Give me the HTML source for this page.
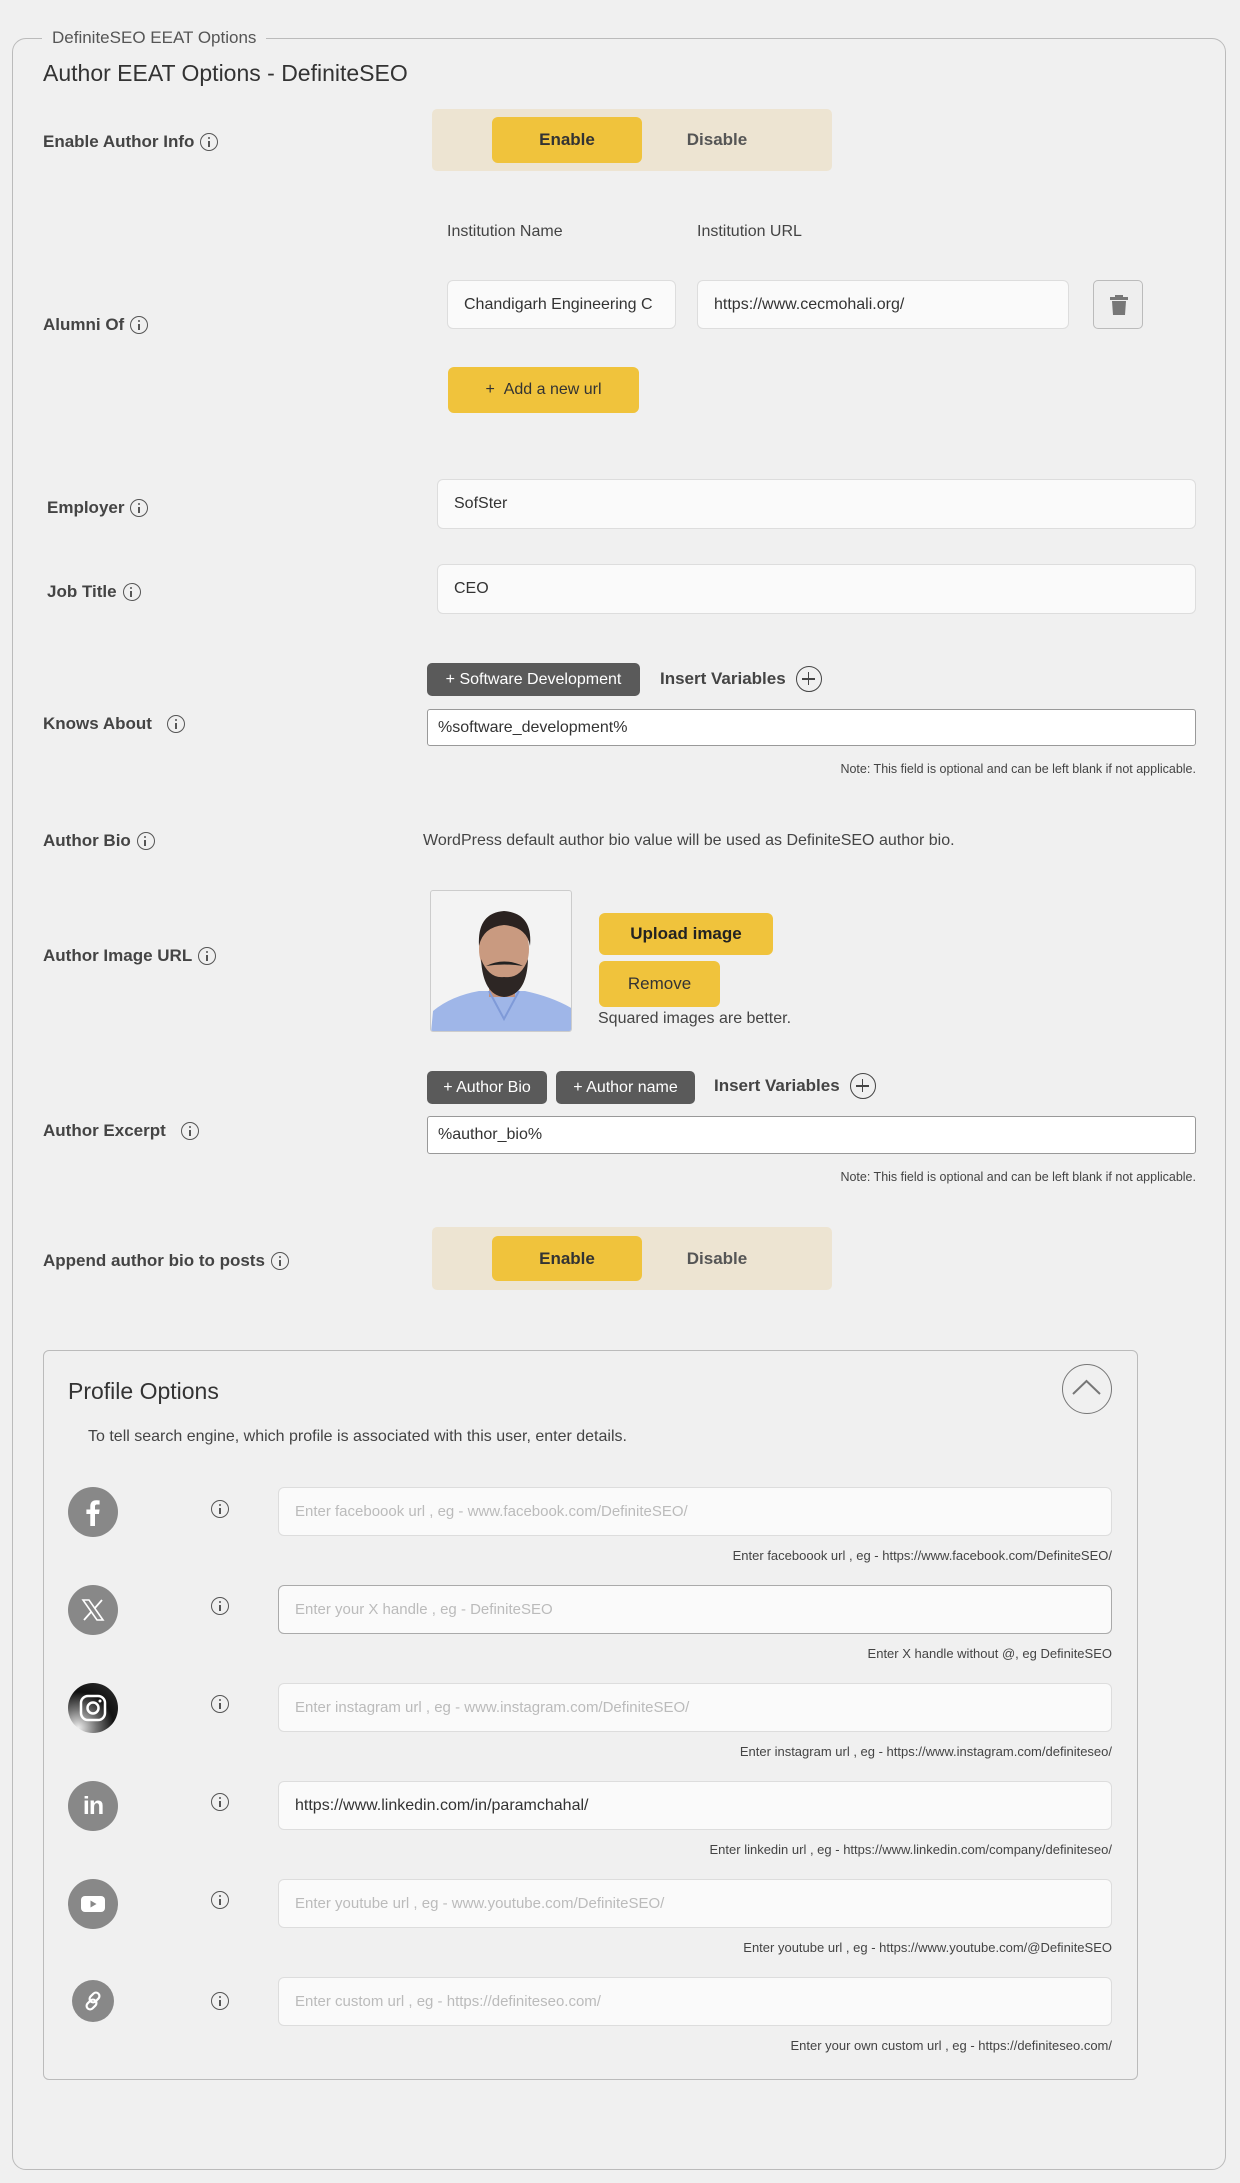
<!DOCTYPE html>
<html><head><meta charset="utf-8"><style>
*{box-sizing:border-box;margin:0;padding:0}
body{width:1240px;height:2183px;background:#f0f0f0;font-family:"Liberation Sans",sans-serif;color:#3c3c3c;position:relative;overflow:hidden}
.a{position:absolute}
.lbl{position:absolute;font-size:17px;font-weight:bold;color:#444;display:flex;align-items:center;gap:6px;transform:translateY(-50%)}
.ic{display:inline-block;width:18px;height:18px;border:1.6px solid #555;border-radius:50%;position:relative}
.ic:before{content:"";position:absolute;left:6.6px;top:3px;width:2px;height:2px;background:#555;border-radius:1px}
.ic:after{content:"";position:absolute;left:6.6px;top:6.5px;width:2px;height:6px;background:#555}
.inp{position:absolute;background:#fafafa;border:1px solid #ddd;border-radius:6px;font-size:16px;color:#333;padding-left:16px;display:flex;align-items:center;white-space:nowrap;overflow:hidden}
.ph{color:#bbb;font-size:15px}
.tog{position:absolute;background:#ede4d2;border-radius:5px}
.btn{position:absolute;background:#f0c33c;border-radius:6px;display:flex;align-items:center;justify-content:center;font-size:17px;color:#333}
.tag{position:absolute;background:#5a5a5a;color:#fff;border-radius:5px;font-size:16px;display:flex;align-items:center;justify-content:center}
.note{position:absolute;right:44px;font-size:12.5px;color:#444}
.pl{position:absolute;width:26px;height:26px;border:1.6px solid #444;border-radius:50%}
.pl:before{content:"";position:absolute;left:5px;top:11px;width:13px;height:1.6px;background:#444}
.pl:after{content:"";position:absolute;left:10.7px;top:5px;width:1.6px;height:13px;background:#444}
.si{position:absolute;left:68px;width:50px;height:50px;border-radius:50%;background:#888;display:flex;align-items:center;justify-content:center}
.ii{position:absolute;left:211px}
.help{position:absolute;right:128px;font-size:13px;color:#444}
</style></head><body>
<div class="a" style="left:12px;top:38px;width:1214px;height:2132px;border:1.5px solid #bbb;border-radius:14px"></div>
<div class="a" style="left:42px;top:27px;padding:0 10px;background:#f0f0f0;font-size:17px;color:#555;line-height:22px">DefiniteSEO EEAT Options</div>
<div class="a" style="left:43px;top:60px;font-size:23px;color:#333">Author EEAT Options - DefiniteSEO</div>

<div class="lbl" style="left:43px;top:142px">Enable Author Info <span class="ic"></span></div>
<div class="tog" style="left:432px;top:109px;width:400px;height:62px"></div>
<div class="btn" style="left:492px;top:117px;width:150px;height:46px;font-weight:bold">Enable</div>
<div class="a" style="left:642px;top:117px;width:150px;height:46px;display:flex;align-items:center;justify-content:center;font-weight:bold;font-size:17px;color:#555">Disable</div>

<div class="a" style="left:447px;top:223px;font-size:16px;color:#444">Institution Name</div>
<div class="a" style="left:697px;top:223px;font-size:16px;color:#444">Institution URL</div>
<div class="lbl" style="left:43px;top:325px">Alumni Of <span class="ic"></span></div>
<div class="inp" style="left:447px;top:280px;width:229px;height:49px">Chandigarh Engineering C</div>
<div class="inp" style="left:697px;top:280px;width:372px;height:49px">https://www.cecmohali.org/</div>
<div class="a" style="left:1093px;top:280px;width:50px;height:49px;border:1.5px solid #bbb;border-radius:5px;background:#eee">
<svg width="50" height="49" viewBox="0 0 50 49"><rect x="16" y="16" width="18" height="3" fill="#777"/><rect x="21" y="14" width="8" height="3" fill="#777"/><path d="M18 20h14l-1 14h-12z" fill="#777"/></svg></div>
<div class="btn" style="left:448px;top:367px;width:191px;height:46px;font-size:16px">+&nbsp;&nbsp;Add a new url</div>

<div class="lbl" style="left:47px;top:508px">Employer <span class="ic"></span></div>
<div class="inp" style="left:437px;top:479px;width:759px;height:50px">SofSter</div>
<div class="lbl" style="left:47px;top:592px">Job Title <span class="ic"></span></div>
<div class="inp" style="left:437px;top:564px;width:759px;height:50px">CEO</div>

<div class="tag" style="left:427px;top:663px;width:213px;height:33px">+ Software Development</div>
<div class="a" style="left:660px;top:669px;font-size:17px;font-weight:bold;color:#444">Insert Variables</div>
<div class="pl" style="left:796px;top:666px"></div>
<div class="lbl" style="left:43px;top:724px">Knows About &nbsp;<span class="ic"></span></div>
<div class="inp" style="left:427px;top:709px;width:769px;height:37px;background:#fff;border-color:#999;border-radius:3px;padding-left:10px">%software_development%</div>
<div class="note" style="top:762px">Note: This field is optional and can be left blank if not applicable.</div>

<div class="lbl" style="left:43px;top:841px">Author Bio <span class="ic"></span></div>
<div class="a" style="left:423px;top:832px;font-size:16px;color:#444">WordPress default author bio value will be used as DefiniteSEO author bio.</div>

<div class="lbl" style="left:43px;top:956px">Author Image URL <span class="ic"></span></div>
<div class="a" style="left:430px;top:890px;width:142px;height:142px;border:1px solid #ccc;border-radius:3px;background:#f3f3f3;overflow:hidden">
<svg width="142" height="142" viewBox="0 0 142 142"><path d="M0 142 L2 120 Q20 105 48 100 L94 100 Q122 106 142 118 L142 142Z" fill="#9fb6e8"/><rect x="58" y="88" width="26" height="18" fill="#c49178"/><ellipse cx="73" cy="58" rx="25" ry="33" fill="#c99a80"/><path d="M48 55 Q46 22 73 20 Q102 22 99 55 Q96 36 73 34 Q52 36 48 55Z" fill="#2a2220"/><path d="M50 68 Q52 104 73 106 Q96 104 97 68 Q90 88 73 86 Q58 88 50 68Z" fill="#2d2624"/><path d="M55 75 Q73 66 92 75 Q73 72 55 75Z" fill="#222"/><path d="M58 100 L73 128 L88 100" fill="none" stroke="#7f9ad8" stroke-width="2"/></svg></div>
<div class="btn" style="left:599px;top:913px;width:174px;height:42px;font-weight:bold;color:#222">Upload image</div>
<div class="btn" style="left:599px;top:961px;width:121px;height:46px">Remove</div>
<div class="a" style="left:598px;top:1010px;font-size:16px;color:#444">Squared images are better.</div>

<div class="tag" style="left:427px;top:1071px;width:120px;height:33px">+ Author Bio</div>
<div class="tag" style="left:556px;top:1071px;width:139px;height:33px">+ Author name</div>
<div class="a" style="left:714px;top:1076px;font-size:17px;font-weight:bold;color:#444">Insert Variables</div>
<div class="pl" style="left:850px;top:1073px"></div>
<div class="lbl" style="left:43px;top:1131px">Author Excerpt &nbsp;<span class="ic"></span></div>
<div class="inp" style="left:427px;top:1116px;width:769px;height:38px;background:#fff;border-color:#999;border-radius:3px;padding-left:10px">%author_bio%</div>
<div class="note" style="top:1170px">Note: This field is optional and can be left blank if not applicable.</div>

<div class="lbl" style="left:43px;top:1261px">Append author bio to posts <span class="ic"></span></div>
<div class="tog" style="left:432px;top:1227px;width:400px;height:63px"></div>
<div class="btn" style="left:492px;top:1236px;width:150px;height:45px;font-weight:bold">Enable</div>
<div class="a" style="left:642px;top:1236px;width:150px;height:45px;display:flex;align-items:center;justify-content:center;font-weight:bold;font-size:17px;color:#555">Disable</div>

<div class="a" style="left:43px;top:1350px;width:1095px;height:730px;border:1.5px solid #bbb;border-radius:6px"></div>
<div class="a" style="left:68px;top:1378px;font-size:23px;color:#333">Profile Options</div>
<div class="a" style="left:1062px;top:1364px;width:50px;height:50px;border:1.5px solid #777;border-radius:50%">
<svg width="47" height="47" viewBox="0 0 47 47"><path d="M10 29 L23.5 16 L37 29" fill="none" stroke="#777" stroke-width="2"/></svg></div>
<div class="a" style="left:88px;top:1428px;font-size:16px;color:#444">To tell search engine, which profile is associated with this user, enter details.</div>

<div class="si" style="top:1487px"><svg width="30" height="30" viewBox="0 0 30 30"><path d="M17 29V17h4l.6-4.5H17V9.7c0-1.3.4-2.2 2.2-2.2h2.4V3.4c-.4 0-1.8-.2-3.5-.2-3.5 0-5.8 2.100-5.8 6v3.300H8.4V17h3.900v12z" fill="#fff"/></svg></div>
<div class="ic ii" style="top:1500px"></div>
<div class="inp" style="left:278px;top:1487px;width:834px;height:49px"><span class="ph">Enter faceboook url , eg - www.facebook.com/DefiniteSEO/</span></div>
<div class="help" style="top:1548px">Enter faceboook url , eg - https://www.facebook.com/DefiniteSEO/</div>

<div class="si" style="top:1585px"><svg width="30" height="30" viewBox="0 0 30 30"><path d="M5 5h6l14 20h-6z" fill="none" stroke="#fff" stroke-width="1.6"/><path d="M24 5L16.500 13.500M6 25l7.500-8.500" stroke="#fff" stroke-width="1.8"/></svg></div>
<div class="ic ii" style="top:1597px"></div>
<div class="inp" style="left:278px;top:1585px;width:834px;height:49px;border-color:#aaa"><span class="ph">Enter your X handle , eg - DefiniteSEO</span></div>
<div class="help" style="top:1646px">Enter X handle without @, eg DefiniteSEO</div>

<div class="si" style="top:1683px;background:radial-gradient(circle at 20% 90%,#eee 0,#777 30%,#111 60%,#333 100%)"><svg width="34" height="34" viewBox="0 0 34 34"><rect x="5" y="5" width="24" height="24" rx="7" fill="none" stroke="#fff" stroke-width="2.5"/><circle cx="17" cy="17" r="5.5" fill="none" stroke="#fff" stroke-width="2.5"/><circle cx="24" cy="10" r="1.5" fill="#fff"/></svg></div>
<div class="ic ii" style="top:1695px"></div>
<div class="inp" style="left:278px;top:1683px;width:834px;height:49px"><span class="ph">Enter instagram url , eg - www.instagram.com/DefiniteSEO/</span></div>
<div class="help" style="top:1744px">Enter instagram url , eg - https://www.instagram.com/definiteseo/</div>

<div class="si" style="top:1781px;font-weight:bold;color:#fff;font-size:25px;letter-spacing:-1px">in</div>
<div class="ic ii" style="top:1793px"></div>
<div class="inp" style="left:278px;top:1781px;width:834px;height:49px">https://www.linkedin.com/in/paramchahal/</div>
<div class="help" style="top:1842px">Enter linkedin url , eg - https://www.linkedin.com/company/definiteseo/</div>

<div class="si" style="top:1879px"><svg width="34" height="34" viewBox="0 0 34 34"><rect x="5" y="9" width="24" height="16" rx="4" fill="#fff"/><path d="M14.500 13.500v7l6-3.500z" fill="#888"/></svg></div>
<div class="ic ii" style="top:1891px"></div>
<div class="inp" style="left:278px;top:1879px;width:834px;height:49px"><span class="ph">Enter youtube url , eg - www.youtube.com/DefiniteSEO/</span></div>
<div class="help" style="top:1940px">Enter youtube url , eg - https://www.youtube.com/@DefiniteSEO</div>

<div class="si" style="top:1980px;left:72px;width:42px;height:42px"><svg width="26" height="26" viewBox="0 0 26 26"><g fill="none" stroke="#fff" stroke-width="2.2"><rect x="11" y="4" width="7" height="11" rx="3.500" transform="rotate(45 14.500 9.500)"/><rect x="8" y="11" width="7" height="11" rx="3.500" transform="rotate(45 11.500 16.500)"/></g></svg></div>
<div class="ic ii" style="top:1992px"></div>
<div class="inp" style="left:278px;top:1977px;width:834px;height:49px"><span class="ph">Enter custom url , eg - https://definiteseo.com/</span></div>
<div class="help" style="top:2038px">Enter your own custom url , eg - https://definiteseo.com/</div>
</body></html>
